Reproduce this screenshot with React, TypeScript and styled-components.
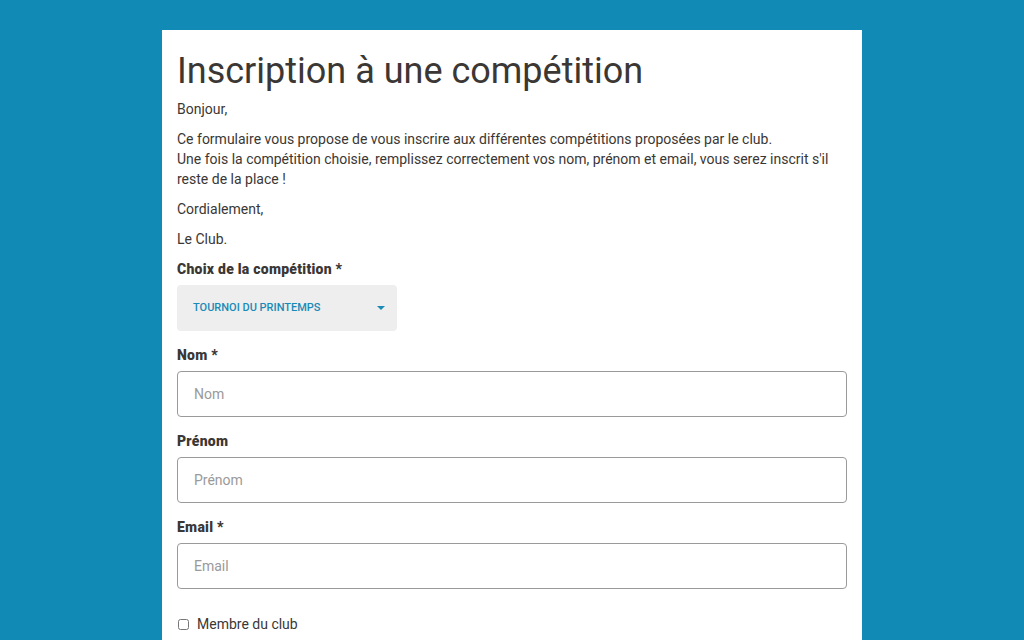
import React from 'react';
import styled, { createGlobalStyle } from 'styled-components';

const GlobalStyle = createGlobalStyle`
  html, body {
    margin: 0;
    padding: 0;
    background-color: #118bb5;
    font-family: Roboto, 'Liberation Sans', sans-serif;
  }
`;

const Page = styled.main`
  padding-top: 30px;
  min-height: 640px;
  box-sizing: border-box;
`;

const Card = styled.section`
  width: 700px;
  margin: 0 auto;
  min-height: 640px;
  background-color: #ffffff;
  padding: 19px 15px 20px;
  box-sizing: border-box;
  color: #3b3734;
  font-size: 14px;
  line-height: 20px;
`;

const Title = styled.h1`
  margin: 0 0 6px;
  font-size: 36px;
  line-height: 44px;
  font-weight: 400;
  color: #3b3734;
`;

const Paragraph = styled.p`
  margin: 0 0 10px;
`;

const Field = styled.div`
  display: flex;
  flex-direction: column;
  align-items: flex-start;
  gap: 6px;
  margin-bottom: 14px;
`;

const Label = styled.label`
  font-weight: 900;
  letter-spacing: 0.25px;
`;

const SelectBox = styled.div`
  width: 220px;
  height: 46px;
  border-radius: 4px;
  background-color: #eeeeee;
  display: flex;
  align-items: center;
  justify-content: space-between;
  padding: 0 12px 0 16px;
  box-sizing: border-box;
  color: #1a8ab6;
  font-size: 11px;
  font-weight: 500;
  text-transform: uppercase;
`;

const Caret = styled.span`
  width: 0;
  height: 0;
  border-left: 4px solid transparent;
  border-right: 4px solid transparent;
  border-top: 4px solid #1a8ab6;
`;

const Input = styled.input`
  width: 100%;
  height: 46px;
  box-sizing: border-box;
  border: 1px solid #9a9a9a;
  border-radius: 4px;
  padding: 0 16px;
  font-family: inherit;
  font-size: 14px;
  color: #3b3734;

  &::placeholder {
    color: #9a9a9a;
  }
`;

const CheckRow = styled.label`
  display: flex;
  align-items: center;
  gap: 8px;
  margin-top: 25px;
  padding-left: 1px;
`;

const Check = styled.input`
  width: 11px;
  height: 11px;
  margin: 1px 0 0;
`;

interface FieldProps {
  label: string;
  required?: boolean;
  placeholder: string;
}

const TextField = ({ label, required, placeholder }: FieldProps) => (
  <Field>
    <Label>
      {label}
      {required ? ' *' : ''}
    </Label>
    <Input type="text" placeholder={placeholder} />
  </Field>
);

export default function App() {
  return (
    <Page>
      <GlobalStyle />
      <Card>
        <Title>Inscription à une compétition</Title>
        <Paragraph>Bonjour,</Paragraph>
        <Paragraph>
          Ce formulaire vous propose de vous inscrire aux différentes compétitions proposées par le club.
          <br />
          Une fois la compétition choisie, remplissez correctement vos nom, prénom et email, vous serez inscrit s'il
          reste de la place !
        </Paragraph>
        <Paragraph>Cordialement,</Paragraph>
        <Paragraph>Le Club.</Paragraph>
        <Field>
          <Label>Choix de la compétition *</Label>
          <SelectBox>
            Tournoi du printemps
            <Caret />
          </SelectBox>
        </Field>
        <TextField label="Nom" required placeholder="Nom" />
        <TextField label="Prénom" placeholder="Prénom" />
        <TextField label="Email" required placeholder="Email" />
        <CheckRow>
          <Check type="checkbox" />
          Membre du club
        </CheckRow>
      </Card>
    </Page>
  );
}
